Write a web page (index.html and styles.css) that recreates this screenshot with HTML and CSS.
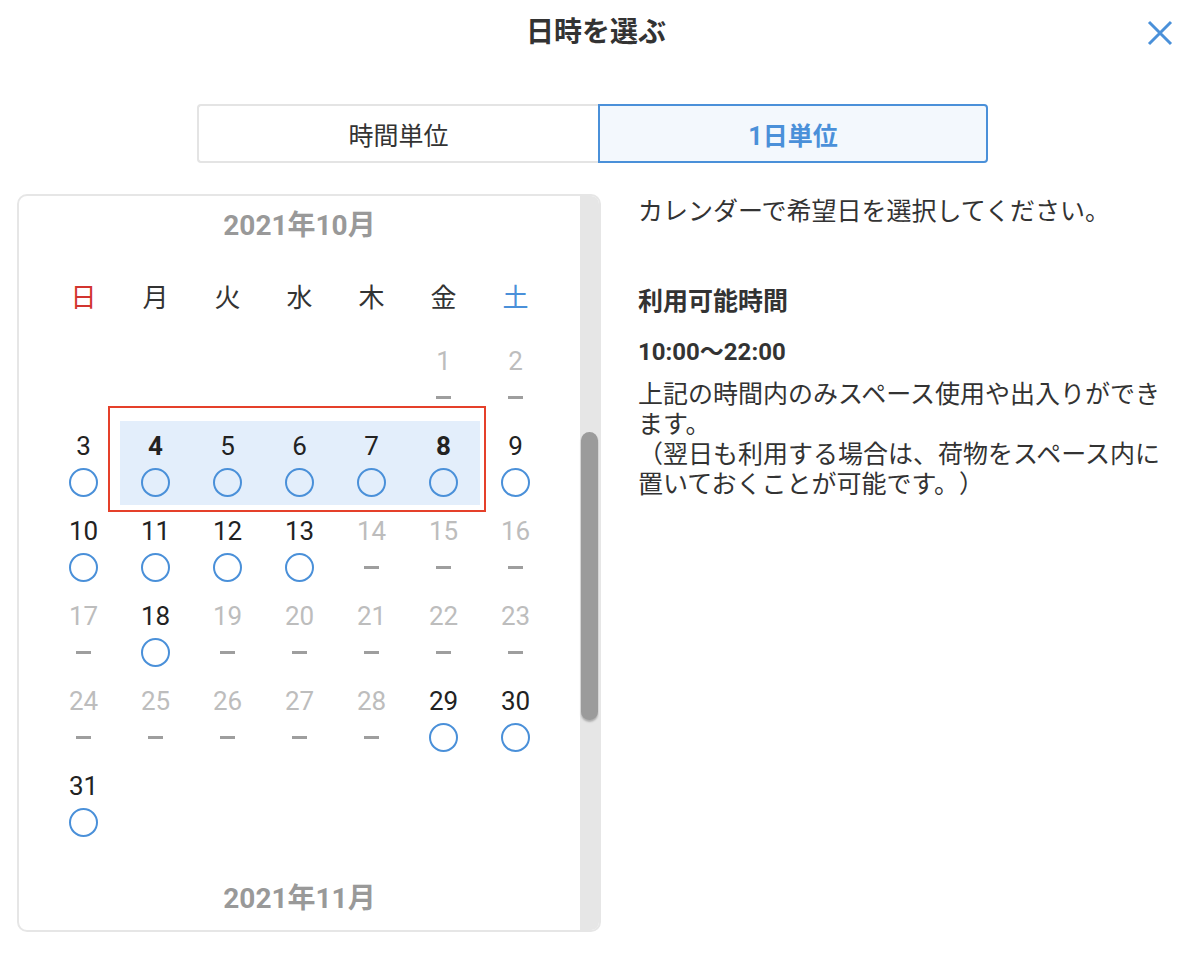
FILE: index.html
```html
<!DOCTYPE html>
<html lang="ja">
<head>
    <meta charset="UTF-8">
    <meta name="viewport" content="width=device-width, initial-scale=1.0">
    <title>日時を選ぶ</title>
    <link rel="stylesheet" href="styles.css">
</head>
<body>
    <header class="header">
        <h1 class="title">日時を選ぶ</h1>
        <button class="close" aria-label="閉じる">
            <svg width="26" height="26" viewBox="0 0 26 26">
                <path d="M2 2 L24 24 M24 2 L2 24" stroke="#4a90d9" stroke-width="3" fill="none"/>
            </svg>
        </button>
    </header>

    <div class="tabs">
        <div class="tab">時間単位</div>
        <div class="tab active">1日単位</div>
    </div>

    <div class="main">
        <div class="calendar">
            <div class="cal-scroll">
                <div class="month-title">2021年10月</div>
                <div class="weekdays">
                    <span class="sun">日</span>
                    <span>月</span>
                    <span>火</span>
                    <span>水</span>
                    <span>木</span>
                    <span>金</span>
                    <span class="sat">土</span>
                </div>
                <div class="days">
                    <div class="day off first"><span class="num">1</span><span class="dash"></span></div>
                    <div class="day off"><span class="num">2</span><span class="dash"></span></div>

                    <div class="day"><span class="num">3</span><span class="ok"></span></div>
                    <div class="day sel edge"><span class="num">4</span><span class="ok"></span></div>
                    <div class="day sel"><span class="num">5</span><span class="ok"></span></div>
                    <div class="day sel"><span class="num">6</span><span class="ok"></span></div>
                    <div class="day sel"><span class="num">7</span><span class="ok"></span></div>
                    <div class="day sel edge"><span class="num">8</span><span class="ok"></span></div>
                    <div class="day"><span class="num">9</span><span class="ok"></span></div>

                    <div class="day"><span class="num">10</span><span class="ok"></span></div>
                    <div class="day"><span class="num">11</span><span class="ok"></span></div>
                    <div class="day"><span class="num">12</span><span class="ok"></span></div>
                    <div class="day"><span class="num">13</span><span class="ok"></span></div>
                    <div class="day off"><span class="num">14</span><span class="dash"></span></div>
                    <div class="day off"><span class="num">15</span><span class="dash"></span></div>
                    <div class="day off"><span class="num">16</span><span class="dash"></span></div>

                    <div class="day off"><span class="num">17</span><span class="dash"></span></div>
                    <div class="day"><span class="num">18</span><span class="ok"></span></div>
                    <div class="day off"><span class="num">19</span><span class="dash"></span></div>
                    <div class="day off"><span class="num">20</span><span class="dash"></span></div>
                    <div class="day off"><span class="num">21</span><span class="dash"></span></div>
                    <div class="day off"><span class="num">22</span><span class="dash"></span></div>
                    <div class="day off"><span class="num">23</span><span class="dash"></span></div>

                    <div class="day off"><span class="num">24</span><span class="dash"></span></div>
                    <div class="day off"><span class="num">25</span><span class="dash"></span></div>
                    <div class="day off"><span class="num">26</span><span class="dash"></span></div>
                    <div class="day off"><span class="num">27</span><span class="dash"></span></div>
                    <div class="day off"><span class="num">28</span><span class="dash"></span></div>
                    <div class="day"><span class="num">29</span><span class="ok"></span></div>
                    <div class="day"><span class="num">30</span><span class="ok"></span></div>

                    <div class="day"><span class="num">31</span><span class="ok"></span></div>

                    <!-- 選択範囲の枠 -->
                    <div class="range-frame"></div>
                </div>
                <div class="month-title next">2021年11月</div>
            </div>
            <div class="scrollbar">
                <div class="thumb"></div>
            </div>
        </div>

        <div class="info">
            <p class="lead">カレンダーで希望日を選択してください。</p>
            <h2 class="info-title">利用可能時間</h2>
            <p class="hours">10:00〜22:00</p>
            <p class="note">上記の時間内のみスペース使用や出入りができます。<br>（翌日も利用する場合は、荷物をスペース内に置いておくことが可能です。）</p>
        </div>
    </div>
</body>
</html>
```

FILE: styles.css
```css
body {
    margin: 0;
    padding: 0;
    width: 1192px;
    background-color: #fff;
    color: #333;
    font-family: Roboto, "Noto Sans CJK JP", sans-serif;
    text-spacing-trim: space-all;
}

/* ヘッダー */
.header {
    height: 66px;
    display: grid;
    grid-template-columns: 1fr auto 1fr;
    align-items: center;
}

.title {
    grid-column: 2;
    margin: 0;
    font-size: 28px;
    font-weight: bold;
    line-height: 40px;
    color: #333;
}

.close {
    grid-column: 3;
    justify-self: end;
    margin-right: 19px;
    padding: 0;
    border: none;
    background: none;
    width: 26px;
    height: 26px;
    display: flex;
    cursor: pointer;
}

/* 切り替えタブ */
.tabs {
    display: flex;
    margin: 38px 0 0 197px;
    height: 59px;
}

.tab {
    box-sizing: border-box;
    width: 401px;
    display: flex;
    justify-content: center;
    align-items: center;
    font-size: 25px;
    color: #333;
    border: 2px solid #e4e4e4;
    border-right: none;
    border-radius: 4px 0 0 4px;
    background: #fff;
}

.tab.active {
    width: 390px;
    border: 2px solid #4a90d9;
    border-radius: 0 4px 4px 0;
    background: #f3f8fd;
    color: #4a90d9;
    font-weight: bold;
}

/* メイン */
.main {
    display: flex;
    gap: 37px;
    margin-top: 31px;
    padding-left: 17px;
}

.calendar {
    box-sizing: border-box;
    width: 584px;
    height: 738px;
    border: 2px solid #e6e6e6;
    border-radius: 10px;
    overflow: hidden;
    display: flex;
}

.cal-scroll {
    flex: 1;
    overflow: hidden;
}

.scrollbar {
    width: 19px;
    background: #e6e6e6;
}

.thumb {
    margin: 236px 1px 0 1px;
    height: 288px;
    border-radius: 9px;
    background: #9b9b9b;
    box-shadow: 0 2px 2px rgba(0, 0, 0, 0.25);
}

.month-title {
    padding-top: 10px;
    text-align: center;
    font-size: 28px;
    font-weight: bold;
    line-height: 40px;
    color: #999;
}

.month-title.next {
    padding-top: 0;
    margin-top: 33px;
}

.weekdays,
.days {
    display: grid;
    grid-template-columns: repeat(7, 72px);
    width: 504px;
    margin: 0 auto;
}

.weekdays {
    margin-top: 32px;
    line-height: 40px;
    font-size: 26px;
    text-align: center;
    color: #333;
}

.weekdays .sun { color: #d2352f; }
.weekdays .sat { color: #4a90d9; }

.days {
    position: relative;
    margin-top: 18px;
    grid-auto-rows: 85px;
}

.day {
    box-sizing: border-box;
    padding-top: 10px;
    display: flex;
    flex-direction: column;
    align-items: center;
}

.day.first { grid-column-start: 6; }

.day.sel {
    background: #e3eefb;
    height: 84px;
}

.num {
    line-height: 30px;
    font-size: 26px;
    color: #222;
}

.day.edge .num { font-weight: bold; }

.day.off .num { color: #bdbdbd; }

.ok,
.dash {
    margin-top: 6px;
    height: 30px;
    width: 30px;
    display: flex;
    justify-content: center;
    align-items: center;
}

.ok::before {
    content: '';
    box-sizing: border-box;
    width: 29px;
    height: 29px;
    border: 2px solid #4a90d9;
    border-radius: 50%;
}

.dash::before {
    content: '';
    width: 15px;
    height: 3px;
    background: #9e9e9e;
}

.range-frame {
    position: absolute;
    left: 60px;
    top: 70px;
    width: 378px;
    height: 106px;
    box-sizing: border-box;
    border: 2px solid #e5402a;
    pointer-events: none;
}

/* 右側の説明 */
.info {
    width: 530px;
    padding-top: 2px;
    font-size: 25px;
    color: #333;
}

.lead {
    margin: 0;
    line-height: 32px;
}

.info-title {
    margin: 58px 0 0;
    font-size: 25px;
    font-weight: bold;
    line-height: 32px;
}

.hours {
    margin: 18px 0 0;
    font-size: 24px;
    font-weight: bold;
    line-height: 32px;
}

.note {
    margin: 12px 0 0;
    line-height: 30px;
}
```
